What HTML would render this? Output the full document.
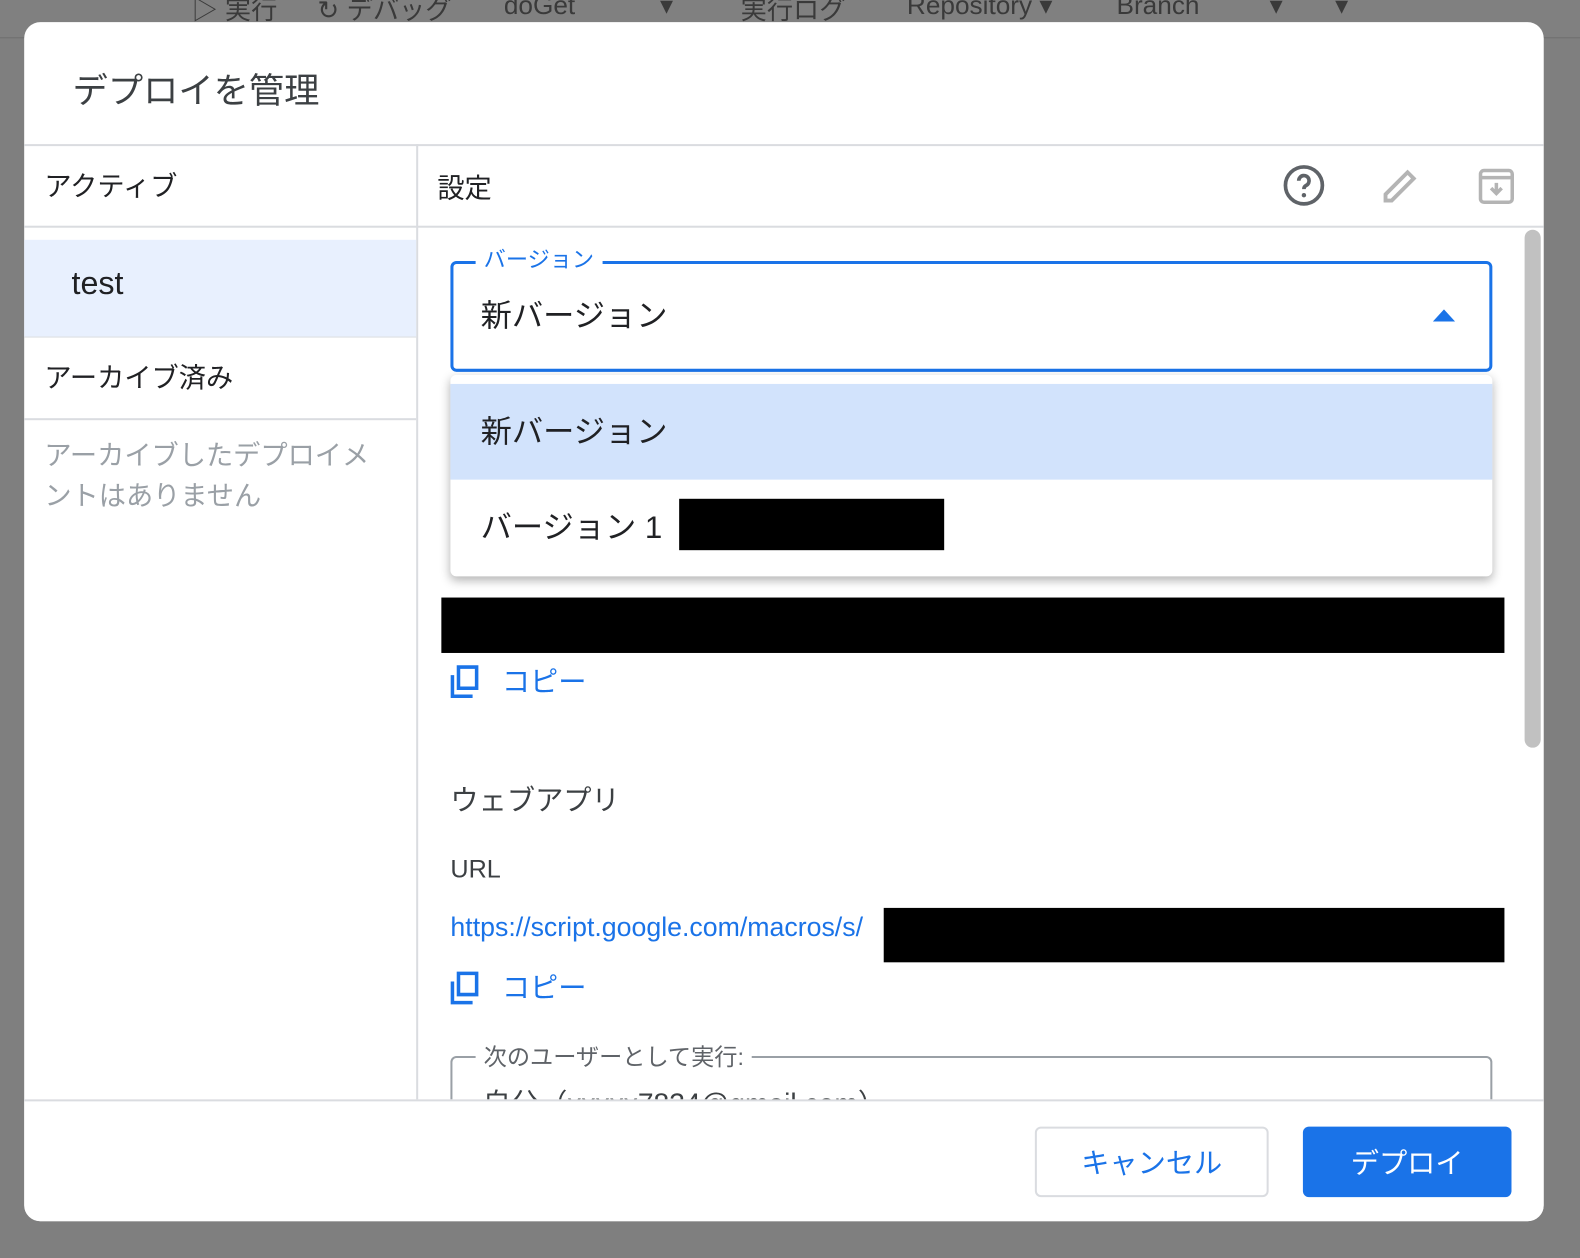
<!DOCTYPE html>
<html><head><meta charset="utf-8"><style>
*{box-sizing:border-box;margin:0;padding:0}
body{width:1580px;height:1258px;background:#7f7f7f;font-family:"Liberation Sans","Noto Sans CJK JP",sans-serif;position:relative;overflow:hidden;color:#202124}
#w{position:absolute;left:0;top:0;width:1568px;height:1248px;transform:scale(1.00766);transform-origin:0 0}
.tb{position:absolute;left:0;top:0;width:1580px;height:38px;background:#808080;border-bottom:1px solid #6e6e6e;color:#3a3a3a;font-size:26px;white-space:nowrap}
.tb span{position:absolute;top:-10px}
.dlg{position:absolute;left:24px;top:22px;width:1508px;height:1190px;background:#fff;border-radius:16px;overflow:hidden}
.a{position:absolute}
.title{left:48px;top:40px;font-size:35px;color:#3c4043}
.hl{background:#dadce0}
.blue{color:#1a73e8}
.btn{position:absolute;top:1096px;height:70px;border-radius:6px;font-size:28px;display:flex;align-items:center;justify-content:center}
</style></head><body><div id="w">
<div class="tb"><span style="left:190px">▷ 実行</span><span style="left:315px">↻ デバッグ</span><span style="left:500px">doGet</span><span style="left:655px">▾</span><span style="left:735px">実行ログ</span><span style="left:900px">Repository ▾</span><span style="left:1108px">Branch</span><span style="left:1260px">▾</span><span style="left:1325px">▾</span></div>
<div class="dlg">
<div class="a title">デプロイを管理</div>
<div class="a hl" style="left:0;top:121px;width:1508px;height:2px"></div>
<div class="a hl" style="left:389px;top:121px;width:2px;height:950px"></div>
<div class="a hl" style="left:0;top:202px;width:1508px;height:2px"></div>
<div class="a" style="left:20px;top:141px;font-size:27px">アクティブ</div>
<div class="a" style="left:410px;top:143px;font-size:27px">設定</div>
<svg class="a" style="left:1248px;top:140px" width="44" height="44" viewBox="0 0 24 24"><circle cx="12" cy="12" r="10" fill="none" stroke="#5f6368" stroke-width="2"/><path d="M9.2 9.5a2.8 2.8 0 1 1 4 2.5c-.8.4-1.2 1-1.2 2" fill="none" stroke="#5f6368" stroke-width="2"/><circle cx="12" cy="17.3" r="1.2" fill="#5f6368"/></svg>
<svg class="a" style="left:1344px;top:142px" width="42" height="42" viewBox="0 0 24 24"><path d="M4 20v-3.5L16.5 4l3.5 3.5L7.5 20z" fill="none" stroke="#b4b4b4" stroke-width="2.2"/></svg>
<svg class="a" style="left:1440px;top:142px" width="42" height="42" viewBox="0 0 24 24"><rect x="3" y="3" width="18" height="18" rx="2" fill="none" stroke="#b4b4b4" stroke-width="2"/><path d="M3 7h18M12 10v6M9 13l3 3 3-3" fill="none" stroke="#b4b4b4" stroke-width="2"/></svg>
<div class="a" style="left:0;top:216px;width:389px;height:96px;background:#e8f0fe"></div>
<div class="a" style="left:47px;top:241px;font-size:32px">test</div>
<div class="a hl" style="left:0;top:312px;width:389px;height:1px"></div>
<div class="a" style="left:20px;top:331px;font-size:27px">アーカイブ済み</div>
<div class="a hl" style="left:0;top:393px;width:389px;height:2px"></div>
<div class="a" style="left:20px;top:410px;font-size:27px;color:#9aa0a6;line-height:40px;width:345px">アーカイブしたデプロイメントはありません</div>
<div class="a" style="left:1489px;top:206px;width:16px;height:514px;background:#c1c1c1;border-radius:8px"></div>
<div class="a" style="left:423px;top:237px;width:1034px;height:110px;border:3px solid #1a73e8;border-radius:6px"></div>
<div class="a blue" style="left:448px;top:218px;background:#fff;padding:0 8px;font-size:22px">バージョン</div>
<div class="a" style="left:453px;top:266px;font-size:31px">新バージョン</div>
<svg class="a" style="left:1398px;top:285px" width="22" height="12"><path d="M0 12L11 0 22 12z" fill="#1a73e8"/></svg>
<div class="a" style="left:423px;top:350px;width:1034px;height:200px;background:#fff;border-radius:6px;box-shadow:0 4px 10px rgba(0,0,0,.3)"></div>
<div class="a" style="left:423px;top:359px;width:1034px;height:95px;background:#d2e3fc"></div>
<div class="a" style="left:453px;top:381px;font-size:31px">新バージョン</div>
<div class="a" style="left:453px;top:476px;font-size:31px">バージョン 1</div>
<div class="a" style="left:650px;top:473px;width:263px;height:51px;background:#000"></div>
<div class="a" style="left:414px;top:571px;width:1055px;height:55px;background:#000"></div>
<svg class="a" style="left:422px;top:636px" width="32" height="36" viewBox="0 0 32 36"><path d="M3 12v21h20M9 4h18v21H9z" fill="none" stroke="#1a73e8" stroke-width="3.5"/></svg>
<div class="a blue" style="left:474px;top:633px;font-size:28px">コピー</div>
<div class="a" style="left:423px;top:751px;font-size:28px;color:#3c4043">ウェブアプリ</div>
<div class="a" style="left:423px;top:827px;font-size:25px;color:#3c4043">URL</div>
<div class="a blue" style="left:423px;top:883px;font-size:26.5px">https://script.google.com/macros/s/</div>
<div class="a" style="left:853px;top:879px;width:616px;height:54px;background:#000"></div>
<svg class="a" style="left:422px;top:940px" width="32" height="36" viewBox="0 0 32 36"><path d="M3 12v21h20M9 4h18v21H9z" fill="none" stroke="#1a73e8" stroke-width="3.5"/></svg>
<div class="a blue" style="left:474px;top:937px;font-size:28px">コピー</div>
<div class="a" style="left:423px;top:1026px;width:1034px;height:100px;border:2px solid #9aa0a6;border-radius:6px"></div>
<div class="a" style="left:448px;top:1008px;background:#fff;padding:0 8px;font-size:23px;color:#5f6368">次のユーザーとして実行:</div>
<div class="a" style="left:455px;top:1052px;font-size:28px;color:#3c4043">自分（xxxxx7834@gmail.com）</div>
<div class="a" style="left:0;top:1069px;width:1508px;height:121px;background:#fff;border-top:2px solid #dadce0"></div>
<div class="btn blue" style="left:1003px;width:232px;border:2px solid #dadce0;background:#fff">キャンセル</div>
<div class="btn" style="left:1269px;width:207px;background:#1a73e8;color:#fff">デプロイ</div>
</div>
</div></body></html>
